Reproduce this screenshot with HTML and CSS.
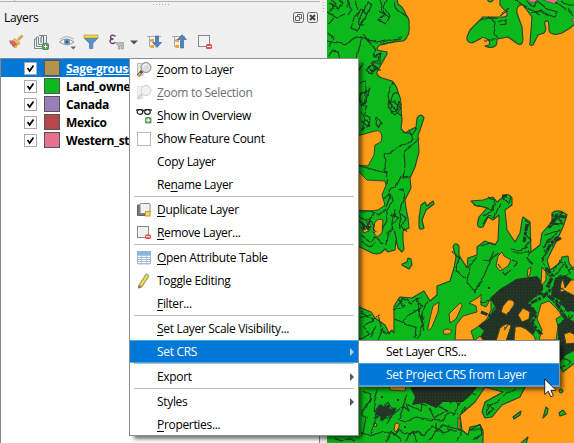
FILE: index.html
```html
<!DOCTYPE html>
<html lang="en">
<head>
<meta charset="utf-8">
<title>Layers</title>
<link rel="stylesheet" href="styles.css">
</head>
<body>
<main class="window">
  <section class="panel">
    <div class="dock-edge"><i class="tick"></i></div>
    <div class="dots-h"></div>
    <div class="dots-v"></div>
    <header class="title">
      <span>Layers</span>
      <div class="title-buttons">
        <svg width="11" height="11" viewBox="0 0 11 11"><rect x=".5" y=".5" width="10" height="10" rx="2"/><path d="M4.500 4V2.500H8.500V6.500H7M2.500 4.500H6.500V8.500H2.500Z"/></svg>
        <svg width="11" height="11" viewBox="0 0 11 11"><rect x=".5" y=".5" width="10" height="10" rx="2"/><path class="x" d="M3 3L8 8M8 3L3 8"/></svg>
      </div>
    </header>
    <nav class="toolbar">
      <svg width="16" height="16" viewBox="0 0 16 16"><path d="M10 6L14.500 1.500" stroke="#d8a64a" stroke-width="2.600"/><path d="M6.500 4.500L12 9L10.500 11L4.500 6.500Z" fill="#edbd68" stroke="#b98333" stroke-width=".6"/><path d="M1 6.500L5 6.500L10 11L7 14L4 12L4 10L2 9Z" fill="#e2604c"/><path d="M2 9L5 8L5 10L3 11Z" fill="#6b8fc0"/><path d="M6 13L10 10L9 14Z" fill="#f0c24a"/></svg>
      <svg width="16" height="16" viewBox="0 0 16 16" fill="none" stroke="#7b8b8b"><path d="M3 5H1.500V14.500H9M5.500 3H3.500V12.500H10M6 1.500H13.500V9M5.500 3V10.500H9"/><path d="M8 9V4Q8 2 9.500 2T10.500 4V11" stroke="#4c6b78"/><rect x="9.500" y="9.500" width="6" height="6" rx="1" fill="#5a9a5e" stroke="#4f8a54"/><path d="M12.500 10.500V14.500M10.500 12.500H14.500" stroke="#fff"/></svg>
      <svg width="18" height="16" viewBox="0 0 18 16"><path d="M.5 8Q7 2 15 8Q8 13.500 .5 8Z" fill="#fafafa" stroke="#8f989c"/><circle cx="8" cy="8" r="3.200" fill="#6f9dc9"/><circle cx="8" cy="8" r="1.400" fill="#35536f"/><path d="M1 5.500Q7 0 14.500 5" fill="none" stroke="#999" stroke-width=".8"/><path d="M11.500 12.500H17L14.200 15.500Z" fill="#666"/></svg>
      <svg width="16" height="16" viewBox="0 0 16 16"><path d="M1 4H15L9.800 9.500V14.500H6.500V9.500Z" fill="#5b91c7" stroke="#467aac" stroke-width=".7"/><rect x="1" y="1" width="14" height="3" fill="#f0d84a" stroke="#a5913a" stroke-width=".6"/></svg>
      <svg width="17" height="16" viewBox="0 0 17 16"><path d="M7.500 2.500C6 .5 2.500.8 2.500 3C2.500 4.700 4 5 5.500 5C3.500 5 1.800 6 2 7.500C2.300 9.800 6 10 7.500 8.200" fill="none" stroke="#6b426e" stroke-width="1.500"/><path d="M8.500 8.500H15.500V15H13.500V11.500H12V15H10.500V12L8.500 10.500Z" fill="#bdbdbd" stroke="#939393" stroke-width=".6"/></svg>
      <svg width="8" height="5" viewBox="0 0 8 5"><path d="M0 .5H8L4 4.500Z" fill="#555"/></svg>
      <svg width="16" height="16" viewBox="0 0 16 16"><path d="M1 2.500H15M3.500 3V12.500H7M3.500 6.500H7" fill="none" stroke="#aaa"/><path d="M4.500 5h3.500v3H4.500zM4.500 11h3.500v3H4.500z" fill="#f0a534"/><path d="M9.500 2H12.500V8.500H15.500L11 13.500L6.500 8.500H9.500Z" fill="#5282ba" stroke="#345f91" stroke-width=".6"/></svg>
      <svg width="16" height="16" viewBox="0 0 16 16"><path d="M1 2.500H14M3.500 3V12.500H7M3.500 6.500H7" fill="none" stroke="#aaa"/><path d="M4.500 5h3.500v3H4.500zM4.500 11h3.500v3H4.500z" fill="#f0a534"/><path d="M9.500 14H12.500V5.500H15.500L11 .7L6.500 5.500H9.500Z" fill="#5282ba" stroke="#345f91" stroke-width=".6"/></svg>
      <svg width="16" height="16" viewBox="0 0 16 16"><rect x="1.500" y="1.500" width="11" height="11" fill="#f4f4f4" stroke="#888"/><rect x="9" y="10" width="6" height="5" rx="1.500" fill="#e84d50"/><path d="M10 12.500H14" stroke="#fff"/></svg>
    </nav>
    <ul class="tree">
      <li class="selected"><svg class="check" viewBox="0 0 13 13"><path d="M3 6L5.500 9.500L10 3"/></svg><i class="swatch tan"></i><span>Sage-grouse</span></li>
      <li><svg class="check" viewBox="0 0 13 13"><path d="M3 6L5.500 9.500L10 3"/></svg><i class="swatch green"></i><span>Land_owner</span></li>
      <li><svg class="check" viewBox="0 0 13 13"><path d="M3 6L5.500 9.500L10 3"/></svg><i class="swatch violet"></i><span>Canada</span></li>
      <li><svg class="check" viewBox="0 0 13 13"><path d="M3 6L5.500 9.500L10 3"/></svg><i class="swatch red"></i><span>Mexico</span></li>
      <li><svg class="check" viewBox="0 0 13 13"><path d="M3 6L5.500 9.500L10 3"/></svg><i class="swatch pink"></i><span>Western_st</span></li>
    </ul>
  </section>

  <svg class="map" width="247" height="443" viewBox="327 0 247 443">
    <defs>
      <filter id="rough" x="-5%" y="-5%" width="110%" height="110%"><feTurbulence type="fractalNoise" baseFrequency=".09" numOctaves="2" seed="4"/><feDisplacementMap in="SourceGraphic" scale="5" xChannelSelector="R" yChannelSelector="G"/></filter>
      <pattern id="grain" width="3" height="3" patternUnits="userSpaceOnUse"><rect width="3" height="3" fill="#243024"/><rect width="1" height="1" fill="#27432a"/></pattern>
    </defs>
    <rect x="326" width="248" height="443" fill="#ff9e17"/>
    <g class="land">
      <path d="M326 -2H397L398 4Q404 8 406 15Q410 19 409 25Q410 33 407 37Q405 41 402 41L387 43Q377 44 377 50L387 52V54L382 63L377 72Q376 76 382 78L392 81Q397 86 398 92Q402 100 401 108L402 120L401 129L405 133L412 129L416 127L417 118Q421 112 424 118L420 130L418 135L419 152L415 167L410 178L411 188L405 200L406 208L408 218L409 228L403 231V240L404 249L402 252L398 248L396 240L395 250L388 252L385 249L382 252Q377 256 370 252L360 247H326Z"/>
      <path d="M467 37L470 30L483 17L503 17Q508 17 507 13L500 5V-2H576V23L570 28L562 33Q556 35 553 34Q549 33 549 30Q549 20 547 21Q544 20 545 25Q547 30 544 33L538 35L533 45Q529 46 530 43L532 17L523 5Q516 4 517 13L522 27L523 40Q522 46 518 44L508 37L497 39Q497 46 495 46Q491 49 485 46L489 45Q491 41 487 39Q483 36 480 39L472 43Q466 42 467 37Z"/>
      <path d="M487 -1Q490 5 494 -1Z"/>
      <path d="M326 307H359L371 312L375 318L385 325L389 333L392 330L394 333V306L400 297L412 298L424 291L430 301L437 295L437 286L450 281L454 268L456 257L453 247Q455 241 459 246L459 255L467 268L468 258L477 255L477 247L485 241L495 245L498 240L499 220V215L493 220L488 217L483 227Q476 229 478 221L479 217L487 208L475 205L471 201L483 200L493 197L497 202L502 198Q507 191 512 198L512 205L505 210L507 230L515 242L520 233L522 220L523 217L530 222L531 252L540 245L542 233L552 222L552 213Q559 208 567 215L563 227L557 240L547 260L550 270L560 263L562 257L568 256L569 263L574 270H576V362L563 372L558 363L525 387L520 397L502 405L492 417L485 418L482 412L485 402L503 392L485 387L475 402L460 415L462 430L468 435L470 427L480 425L483 430V445H326Z"/>
      <path d="M421 205L425 202L427 206L433 201L434 204L426 210L422 220L424 228Q420 231 419 227L419 218Z"/>
      <path d="M402 264L407 262L408 258L411 259L412 265L409 269L402 265Z"/>
      <path d="M513 417L521 411L520 415L514 419Z"/><path d="M543 418L546 407L548 409L547 414Z"/><path d="M559 413L563 410L566 414L560 416Z"/><path d="M559 391Q561 387 563 391Q561 395 559 391Z"/><path d="M520 444L528 437L526 444Z"/>
    </g>
    <path fill="#e96f91" stroke="#353" stroke-width=".7" d="M525 -1H558L556 4L549 2L540 -1L533 3ZM571 20L575 18V23Z"/>
    <path class="grain" d="M490 298L500 289L510 283L516 279L523 278L537 276L543 283L543 290L534 298L528 303L536 312L530 322L536 330L530 340H478L484 331L478 326L488 319L496 308ZM410 387H477L470 396L463 402L443 402L436 408L425 403L412 405L415 397ZM555 278L565 275L576 282V309L567 312L560 300L551 296Z"/>
    <path class="grain" d="M558 325L566 318L576 322V350L566 355L560 362L558 350Z"/>
    <g class="orange">
      <path d="M357 136L375 131Q381 129 382 137L381 142L375 145L374 155L368 166L357 165Z"/>
      <path d="M357 170L367 180L385 181L386 185L382 195L385 205L378 210L370 211L357 210Z"/>
      <path d="M375 222L379 219L383 220L382 233L377 237L373 232Z"/><path d="M361 227L365 230L368 226L366 220L371 226L369 231L364 233Z"/>
      <path d="M498 256L502 252L504 256L511 260L508 266L500 271L496 266Z"/>
      <path d="M433 306L439 302L438 312L432 327Q427 333 428 328L430 318Z"/>
      <path d="M449 314L459 304Q462 302 462 306L456 319L450 323Z"/><path d="M443 331Q447 327 452 331Q451 335 444 334Z"/>
      <path d="M469 303L479 297L481 294V305L486 307L491 298L491 310L487 319L476 328L471 331L474 340H455L456 325L463 316L477 312L476 306Z"/>
      <path d="M503 306L508 300Q515 299 514 305L507 315L501 312Z"/><path d="M518 315L523 308L530 312L529 319L522 322Z"/>
      <path d="M541 304L549 301L556 308L562 315L556 319L558 326L556 340H539L542 330L537 319Z"/>
      <path d="M515 327Q520 325 526 329L534 336L536 341H514Z"/><path d="M500 328Q508 321 511 326L506 341H496Z"/><path d="M474 341L480 336L484 341Z"/>
      <path d="M527 279L528 269L531 267L530 274Z"/><path d="M541 283L542 267L546 272L546 280L542 285Z"/>
      <path d="M561 283L563 279L565 288L571 280H575V296L565 291L560 292Z"/><path d="M564 334L570 332L575 335V343L566 344Z"/>
      <path d="M389 385H406L405 391L390 390Z"/><path d="M395 424Q400 421 399 427L396 432L394 430Z"/><path d="M374 423L377 424L376 427L374 426Z"/><path d="M458 418H460V431L458 428Z"/>
    </g>
    <g class="borders" filter="url(#rough)">
      <path d="M330 3L337 9L343 3L340 0M328 12L338 18L345 15M347 0L352 9L348 15M356 0L360 12L354 18L351 26L357 31L363 23L371 5L367 2L359 24L365 25M380 0L384 14L378 20L385 24L389 16L384 7L387 0M395 1L397 10L405 16M327 41L346 45L355 37L365 38L376 49M361 36L356 58M363 34L369 41L376 43L402 37M328 58L332 50L339 51L341 58M374 49L374 57L381 53L379 61L371 62L377 68L371 74L366 70L371 66M363 64L358 73M360 83L366 82V93L370 88L365 104L359 97M393 82L388 95L391 108M398 92L393 94L390 104L396 109"/>
      <path d="M375 57h6v6h-7v7h6M368 67l4-2 4 3-4 4zM371 52l4 3 6-2M361 94l5-4v11l-5 5zM389 100l-2 7 7 4 5-3M389 108l7 7 5-7M361 103l6 4-4 7 8 4-3 8-8-5M376 124l1-7 4 5-2 5zM401 117l-5-6 3-9 3 7-8-7M360 129l10-3-3-6-7 3M388 102h8M360 112l5 7-4 11"/>
      <path d="M409 130L413 139L407 144L401 145L391 153L383 155L386 161L384 170L387 173L359 166M418 138L410 147L404 153L405 166L402 178L410 177M401 176L396 188L389 190L392 202L386 212L387 221L382 229M399 190L403 188L404 200L399 213L401 229M387 171L386 185M403 133L412 135L417 128M395 210L392 229L387 234L386 246M359 211L371 211L379 216L386 209M360 221L367 227L373 214M360 216L369 220L376 232M391 214L398 218L392 226L396 240M361 235L370 241L376 237L383 244M361 242L370 247L375 241M384 198L391 194L386 207M400 214L405 218L402 226L407 232"/>
      <path d="M331 0l5 5-6 7M335 18l-8 6M348 0v8M380 11l9 7M358 18l4-10 5 7-8 14M401 39l-20 6M327 31l7 8-6 7"/>
      <path d="M488 18L495 22L493 34L497 39M498 22L505 19V24L500 25M525 0L533 7L537 2L545 8L557 12L554 17L540 10L532 13M561 2L568 5L574 5M568 8L574 17M515 0L529 9L540 14M500 15L509 8M479 21L497 18M555 2L566 10M485 40h10"/>
      <path d="M475 205L493 210L495 199L488 197M503 198L509 203L511 197M482 217L491 212L493 204M495 216L500 203M482 224L489 215L495 217M495 245L490 243L481 246M499 253L493 257L488 266L484 276L479 283L475 293L467 283L469 267L478 257M494 252L489 261L484 260M498 264L505 274L512 269M512 249L518 250L527 247L529 252L513 252M531 250L527 258L533 264M511 260L517 262L514 267M542 245L547 254L542 262L548 269M525 220L530 224L525 234L531 240L524 249M549 228L563 213L552 215L563 224L549 223L560 217M545 235L560 230L543 247L558 237L541 260M555 275L565 263L570 272L558 280M560 263L569 269L574 267M545 270l6 9-6 8M553 272l7-12M553 283l7-9 7 4"/>
      <path d="M394 319L416 327L415 338M403 321L415 311L423 306L417 298M420 303L419 315L423 325L417 339M396 306L404 298L411 303L423 296M427 301L421 316L425 331M453 250L459 260L455 270L466 278M394 310L404 305L398 299M361 311L373 320L363 327L369 334L360 339M371 320L378 316L382 330L390 334M376 326L370 337M384 328L379 339M360 317L370 314"/>
      <path d="M480 302L491 300L496 306L491 316L501 320L507 316L512 321L504 331M508 314L518 303L525 305L533 297L544 295L555 303L563 300M532 307L536 317L530 326L543 334M485 330L497 327L494 335L482 333M557 306L566 299L571 306L560 313L567 323L558 326L569 330M550 293L562 287L574 303L568 318L574 326M561 345L571 350L560 356L570 362L561 368M574 316l-7 6 5 9"/>
      <path d="M362 391L371 394L367 405L362 412L366 418L362 436M378 389L374 403L375 422L370 434M380 407L375 411L384 416L373 418L389 409L380 421L392 417L377 413L396 408L387 424M361 432L369 436L385 431L393 435L400 430L405 435L417 431L424 436L432 425L443 433L453 430M398 419L408 421L416 418L427 420L443 421L449 412L458 415M407 395L403 406L409 411L406 404L421 411L422 404L428 406M436 405L447 411L435 419L430 408M448 403L453 399L460 405L467 392L475 396M453 416L460 403M428 441L443 425L462 430L457 442M407 441L412 431L417 441M466 407L462 414M470 430L480 425L482 433L474 440M386 441L391 432L401 440M335 438L341 441L347 438L354 441"/>
      <path d="M486 412l5-7 10-6M487 405l7 4-8 5M503 396l14-8M469 430h12M436 423v9h8M449 424v7h8M371 397l-5 12M381 410l7-8 7 10 9-6-5 12"/>
    </g>
    <path class="thick" d="M531 303L543 297L552 288M536 292L548 296L562 304L574 311M546 268L553 276L548 286L558 292M481 312L496 318L512 319L517 304L529 304L536 314L532 323L541 334M494 324L512 322L514 332M561 238L551 243L546 253M566 217L556 216L548 229M507 196h-5M556 303L566 318L559 328M527 224l-3 18"/>
    <path class="blot" d="M376 411l5-7 3 3 5-3 1 5 6-1-2 7-7 1-5 6-2-6-4-1zM365 226l6 0-3 5zM362 221l4 5-3 5zM488 287h2v2h-2zM381 396h2v2h-2zM397 399h2v2h-2zM404 426h2v2h-2z"/>
  </svg>

  <div class="menu" role="menu">
    <div class="item"><svg class="ico" viewBox="0 0 16 16"><path d="M1.500 1.500H7V13.500H1.500Z" fill="#e6e6e1" stroke="#bbb"/><path d="M6 9L2 14" stroke="#5b513c" stroke-width="3"/><path d="M4.500 11L2 14" stroke="#e7bd43" stroke-width="1.800"/><circle cx="10" cy="5.500" r="5" fill="#dedede" stroke="#858585"/><path d="M7 5Q8 2 11 2" fill="none" stroke="#fff"/></svg><span><u>Z</u>oom to Layer</span></div>
    <div class="item disabled"><svg class="ico" viewBox="0 0 16 16"><path d="M1.500 1.500H7V13.500H1.500Z" fill="#e6e6e1" stroke="#bbb"/><path d="M6 9L2 14" stroke="#999" stroke-width="3"/><circle cx="10" cy="5.500" r="5" fill="#dedede" stroke="#858585"/></svg><span><u>Z</u>oom to Selection</span></div>
    <div class="item"><svg class="ico" viewBox="0 0 16 16"><path d="M0 2.500L2 1.500H6L7.700 3L9.500 1.500H14L16 2.500" fill="none" stroke="#222" stroke-width="1.200"/><ellipse cx="4" cy="4" rx="2.800" ry="2.300" fill="#fff" stroke="#222" stroke-width="1.200"/><ellipse cx="11.500" cy="4" rx="2.800" ry="2.300" fill="#fff" stroke="#222" stroke-width="1.200"/><rect x="9" y="9" width="6.500" height="6.500" rx="1.500" fill="#5a9a5e"/><path d="M12.200 10.200V14.200M10.200 12.200H14.200" stroke="#fff" stroke-width="1.200"/></svg><span><u>S</u>how in Overview</span></div>
    <div class="item"><i class="ico box"></i><span>Show Feature Count</span></div>
    <div class="item"><i class="ico"></i><span>Copy Layer</span></div>
    <div class="item"><i class="ico"></i><span>Re<u>n</u>ame Layer</span></div>
    <hr>
    <div class="item"><svg class="ico" viewBox="0 0 16 16"><path d="M4 3H1.500V13.500H11" fill="#777" stroke="#666"/><rect x="4" y="1.500" width="10" height="10" rx="1" fill="#f1f1f1" stroke="#888"/><rect x="9.500" y="9.500" width="4.500" height="4.500" fill="#f4dc62" stroke="#b99d27"/></svg><span><u>D</u>uplicate Layer</span></div>
    <div class="item"><svg class="ico" viewBox="0 0 16 16"><rect x="1.500" y="1.500" width="11" height="11" fill="#f1f1f1" stroke="#888"/><rect x="9" y="9.500" width="6" height="4.500" rx="1.500" fill="#e84d50"/><path d="M10 11.700H14" stroke="#fff"/></svg><span><u>R</u>emove Layer...</span></div>
    <hr>
    <div class="item"><svg class="ico" viewBox="0 0 16 16"><rect x="1" y="1" width="14" height="13.500" rx="1" fill="#a9c3dc"/><path d="M1 1H15V5H1Z" fill="#8bb5df"/><path d="M2 6.500H5M6 6.500H10M11 6.500H14M2 8.500H5M6 8.500H10M11 8.500H14M2 10.500H5M6 10.500H10M11 10.500H14M2 12.500H5M6 12.500H10M11 12.500H14" stroke="#f7fafc"/></svg><span><u>O</u>pen Attribute Table</span></div>
    <div class="item"><svg class="ico" viewBox="0 0 16 16"><path d="M3 12L10 1L13 3L6 14L2.500 15Z" fill="#d9c43d" stroke="#8b8042" stroke-width=".7"/><path d="M5 12L11 3" stroke="#f8eb89"/><path d="M2.500 12L5.500 14L2 15.500Z" fill="#777"/><path d="M9.500 2L12.500 4L13.500 2L10.500 0Z" fill="#b9b9a8"/></svg><span>Toggle Editing</span></div>
    <div class="item"><i class="ico"></i><span><u>F</u>ilter...</span></div>
    <hr>
    <div class="item"><i class="ico"></i><span><u>S</u>et Layer Scale Visibility...</span></div>
    <div class="item active"><i class="ico"></i><span>Set CRS</span><b class="arrow"></b></div>
    <hr>
    <div class="item"><i class="ico"></i><span>Export</span><b class="arrow"></b></div>
    <hr>
    <div class="item"><i class="ico"></i><span>Styles</span><b class="arrow"></b></div>
    <div class="item"><i class="ico"></i><span><u>P</u>roperties...</span></div>
  </div>

  <div class="menu submenu" role="menu">
    <div class="item"><span>Set Layer CRS...</span></div>
    <div class="item active"><span>Set <u>P</u>roject CRS from Layer</span></div>
  </div>

  <svg class="cursor" width="13" height="20" viewBox="0 0 13 20"><path d="M.7 1V16.500L4.300 13.200L6.800 18.800L9.300 17.700L6.900 12.300H12Z" fill="#fff" stroke="#111" stroke-width=".9"/></svg>
</main>
</body>
</html>
```

FILE: styles.css
```css
* { box-sizing: border-box; }
body { margin: 0; }
.window {
  position: relative;
  display: flex;
  width: 574px;
  height: 443px;
  overflow: hidden;
  background: #f0f0f0;
  color: #000;
  font: 12px/18px "Open Sans", "Noto Sans", sans-serif;
  letter-spacing: -0.32px;
}
.panel {
  position: relative;
  display: flex;
  flex-direction: column;
  flex: 0 0 327px;
  height: 443px;
}
.dock-edge { width: 320px; height: 2px; border-bottom: 1px solid #b4b4b4; }
.tick { display: block; width: 1px; height: 1px; margin-left: 14px; background: #b4b4b4; }
.dots-h { position: absolute; left: 153px; top: 4px; width: 17px; height: 1px; background: repeating-linear-gradient(90deg, #aaa 0 1px, transparent 1px 3px); }
.dots-v { position: absolute; left: 323px; top: 2px; width: 1px; height: 11px; background: repeating-linear-gradient(#aaa 0 1px, transparent 1px 3px); }
.title { display: flex; justify-content: space-between; align-items: center; height: 31px; padding: 0 9px 0 4px; }
.title-buttons { display: flex; gap: 3px; }
.title-buttons svg { fill: none; stroke: #666; }
.title-buttons .x { stroke-width: 2; stroke: #444; }
.toolbar { display: flex; align-items: center; gap: 9px; height: 25px; padding: 0 0 7px 8px; }
.toolbar svg { flex: none; }
.toolbar svg:nth-child(3) { margin-left: 1px; }
.toolbar svg:nth-child(4) { margin-left: -3px; }
.toolbar svg:nth-child(6) { margin: 0 -1px 0 -4px; }
.toolbar svg:nth-child(9) { margin-left: 1px; }
.tree {
  flex: 1;
  width: 320px;
  margin: 0;
  padding: 0;
  list-style: none;
  border: solid #828790;
  border-width: 1px 1px 0;
  background: #fff;
  font-weight: 700;
}
.tree li { display: flex; align-items: center; height: 18px; padding-left: 23px; }
.tree span { height: 18px; margin-left: 6px; line-height: 20px; }
.selected { background: #0078d7; color: #fff; }
.selected span { text-decoration: underline; }
.check { width: 13px; height: 13px; margin-right: 7px; background: #fff; border: 1px solid #aaa; fill: none; stroke: #000; stroke-width: 2; }
.swatch { width: 16px; height: 16px; border: 1px solid #555; }
.tan { background: #b29350; }
.green { background: #0cb91b; }
.violet { background: #997eb7; }
.red { background: #b6484b; }
.pink { background: #e96f8e; }
.map { flex: 0 0 247px; }
.land path { fill: #0cb91b; stroke: #25422a; stroke-width: 1.1; stroke-linejoin: round; }
.orange path { fill: #ff9e17; stroke: #2d4524; stroke-width: 1; stroke-linejoin: round; }
.grain { fill: url(#grain); }
.borders path { fill: none; stroke: #1d3c23; stroke-width: 1.1; stroke-linejoin: round; }
.thick { fill: none; stroke: #24342a; stroke-width: 3; stroke-dasharray: 7 1 3 2; }
.blot { fill: #24362a; }
.menu {
  position: absolute;
  left: 129px;
  top: 58px;
  width: 230px;
  height: 378px;
  background: #fff;
  box-shadow: 4px 4px 4px -1px rgba(0, 0, 0, .55);
}
.menu::after { content: ""; position: absolute; inset: 0; border: 1px solid #8f8f8f; pointer-events: none; }
.item { display: flex; align-items: center; height: 23px; padding: 1px 7px 0 7px; white-space: pre; }
.item u { text-decoration: underline; text-underline-offset: 2px; text-decoration-thickness: 1px; }
.ico { flex: none; width: 16px; height: 16px; margin-right: 5px; }
.box { width: 14px; height: 14px; margin: 0 6px 0 1px; border: 1px solid #bbb; }
.menu hr { width: 220px; height: 2px; margin: 0 5px; border: 0; border-top: 1px solid #bdbdbd; }
.disabled { color: #6d6d6d; }
.disabled .ico { opacity: .4; }
.active { background: #0078d7; color: #fff; border: solid #42a5f0; border-width: 1px 0; padding-top: 1px; }
.arrow { margin-left: auto; margin-right: -2px; border: solid transparent; border-width: 4px 0 4px 4px; border-left-color: #555; }
.active .arrow { border-left-color: #a9d4f5; }
.submenu { left: 358px; top: 340px; width: 202px; height: 47px; }
.submenu .item { padding-left: 28px; }
.cursor { position: absolute; left: 544px; top: 378px; }
```
